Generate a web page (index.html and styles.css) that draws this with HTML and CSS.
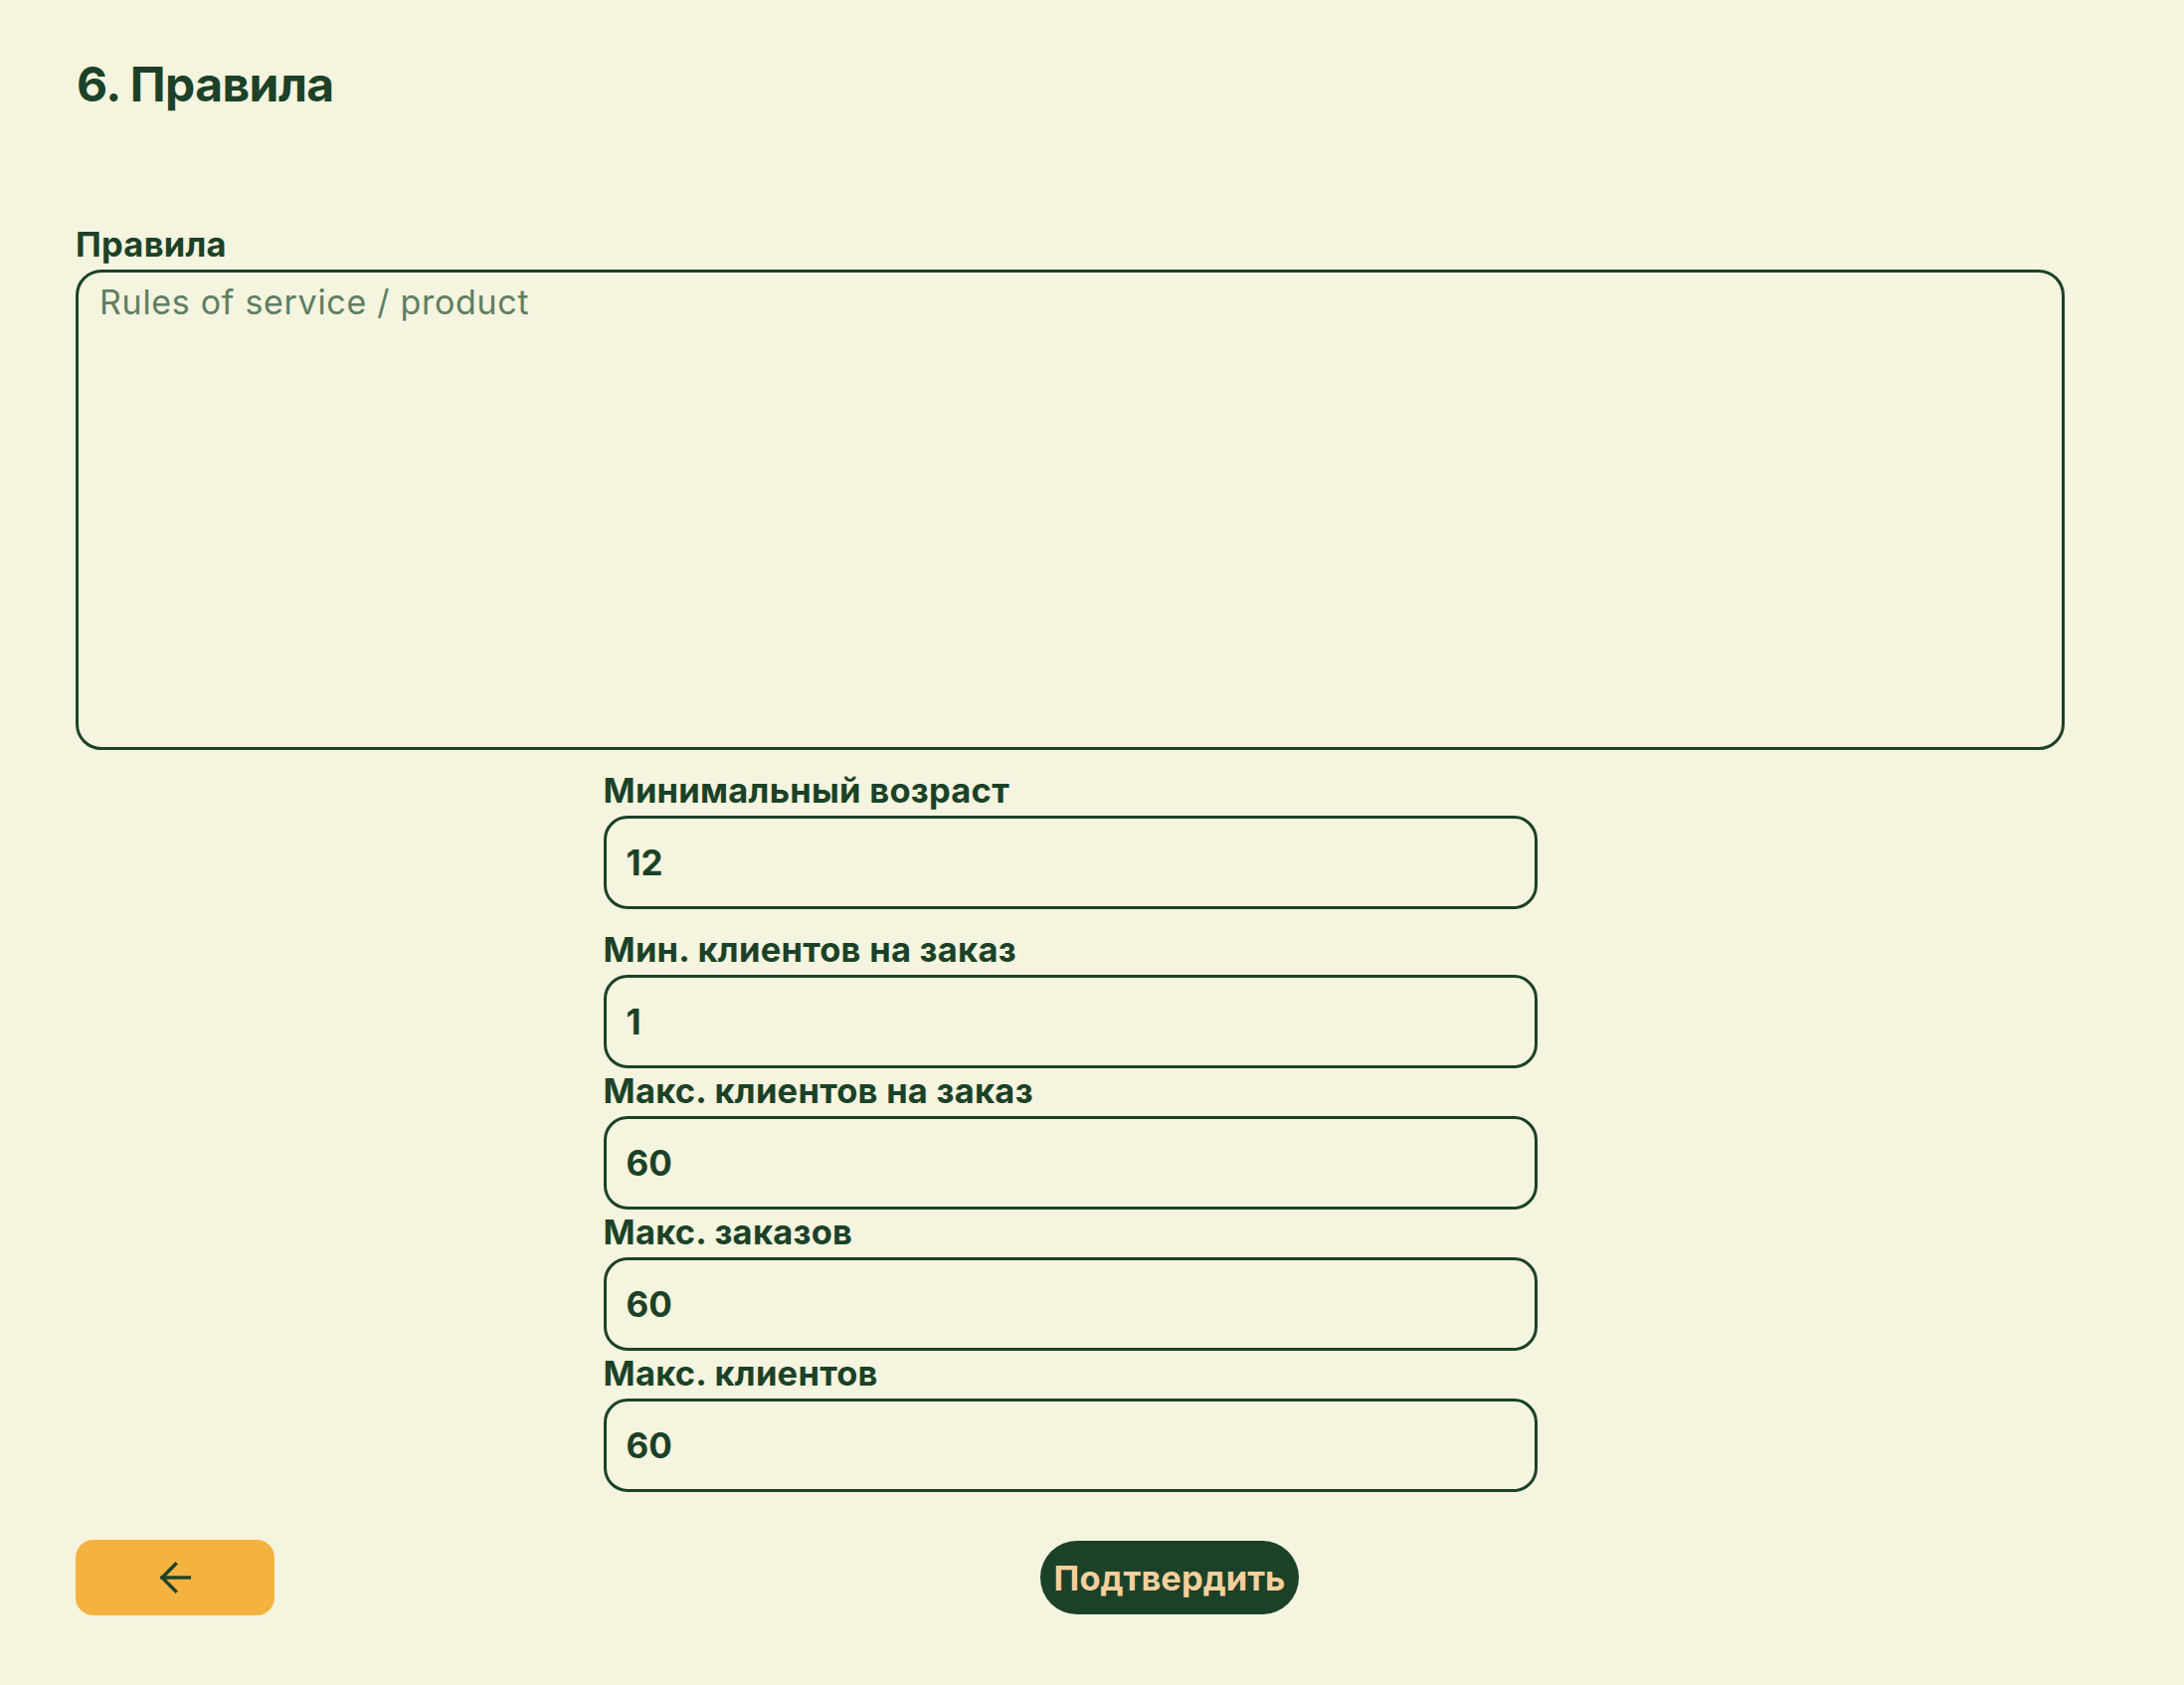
FILE: index.html
```html
<!DOCTYPE html>
<html lang="ru">
<head>
<meta charset="utf-8">
<title>6. Правила</title>
<link rel="stylesheet" href="styles.css">
</head>
<body>
<main class="page">
  <h1 class="title">6. Правила</h1>

  <div class="field field-rules">
    <label class="label" for="rules">Правила</label>
    <textarea id="rules" class="textarea" placeholder="Rules of service / product"></textarea>
  </div>

  <div class="fields">
    <div class="field field-first">
      <label class="label" for="age">Минимальный возраст</label>
      <input id="age" class="input" type="text" value="12">
    </div>
    <div class="field">
      <label class="label" for="minc">Мин. клиентов на заказ</label>
      <input id="minc" class="input" type="text" value="1">
    </div>
    <div class="field">
      <label class="label" for="maxc">Макс. клиентов на заказ</label>
      <input id="maxc" class="input" type="text" value="60">
    </div>
    <div class="field">
      <label class="label" for="maxo">Макс. заказов</label>
      <input id="maxo" class="input" type="text" value="60">
    </div>
    <div class="field">
      <label class="label" for="maxk">Макс. клиентов</label>
      <input id="maxk" class="input" type="text" value="60">
    </div>
  </div>

  <div class="actions">
    <button class="btn-back" type="button" aria-label="Назад">
      <svg class="arrow" width="32" height="32" viewBox="0 0 32 32" fill="none" stroke="#1b4228" stroke-width="3.4" stroke-linecap="square" stroke-linejoin="miter">
        <path d="M30.5 16H3"/>
        <path d="M16.5 2.5L3 16L16.5 29.5"/>
      </svg>
    </button>
    <button class="btn-submit" type="button">Подтвердить</button>
    <span class="spacer"></span>
  </div>
</main>
</body>
</html>
```

FILE: styles.css
```css
html, body {
  margin: 0;
  padding: 0;
  background: #f5f4de;
}

body {
  font-family: Inter, "Noto Sans", "DejaVu Sans", sans-serif;
  color: #1b4228;
}

.page {
  width: 2000px;
  padding: 56px 0 0 76px;
  display: flex;
  flex-direction: column;
}

.title {
  margin: 0 0 0 1px;
  font-size: 48px;
  line-height: 58px;
  font-weight: 700;
  letter-spacing: -0.6px;
}

.field {
  display: flex;
  flex-direction: column;
}

.field-rules {
  margin-top: 114px;
  margin-bottom: 23px;
}

.label {
  font-size: 34.5px;
  line-height: 36px;
  font-weight: 700;
  letter-spacing: 0.25px;
  margin: 0 0 7px 0;
  white-space: nowrap;
}

.textarea {
  box-sizing: border-box;
  width: 2000px;
  height: 483px;
  border: 3px solid #1b4228;
  border-radius: 26px;
  background: transparent;
  padding: 10px 21px;
  font-family: Inter, "Noto Sans", sans-serif;
  font-size: 34px;
  line-height: 40px;
  letter-spacing: 0.7px;
  color: #1b4228;
  resize: none;
  outline: none;
}

.textarea::placeholder {
  color: #5f7e63;
  opacity: 1;
}

.fields {
  width: 939px;
  align-self: center;
  display: flex;
  flex-direction: column;
  gap: 5px;
}

.field-first {
  margin-bottom: 18px;
}

.input {
  box-sizing: border-box;
  width: 939px;
  height: 94px;
  border: 3px solid #1b4228;
  border-radius: 24px;
  background: transparent;
  padding: 0 16px 0 20px;
  font-family: Inter, "Noto Sans", sans-serif;
  font-size: 35px;
  font-weight: 700;
  color: #1b4228;
  outline: none;
}

.actions {
  margin-top: 48px;
  display: flex;
  justify-content: space-between;
  align-items: center;
}

.btn-back {
  width: 200px;
  height: 76px;
  border: none;
  border-radius: 18px;
  background: #f4b33f;
  display: flex;
  align-items: center;
  justify-content: center;
  padding: 0;
  cursor: pointer;
}

.arrow {
  display: block;
}

.btn-submit {
  width: 260px;
  height: 74px;
  border: none;
  border-radius: 37px;
  background: #1b4228;
  color: #f6cf9c;
  font-family: Inter, "Noto Sans", sans-serif;
  font-size: 34.5px;
  font-weight: 700;
  padding: 0;
  white-space: nowrap;
  cursor: pointer;
}

.spacer {
  width: 0;
  height: 0;
}
```
